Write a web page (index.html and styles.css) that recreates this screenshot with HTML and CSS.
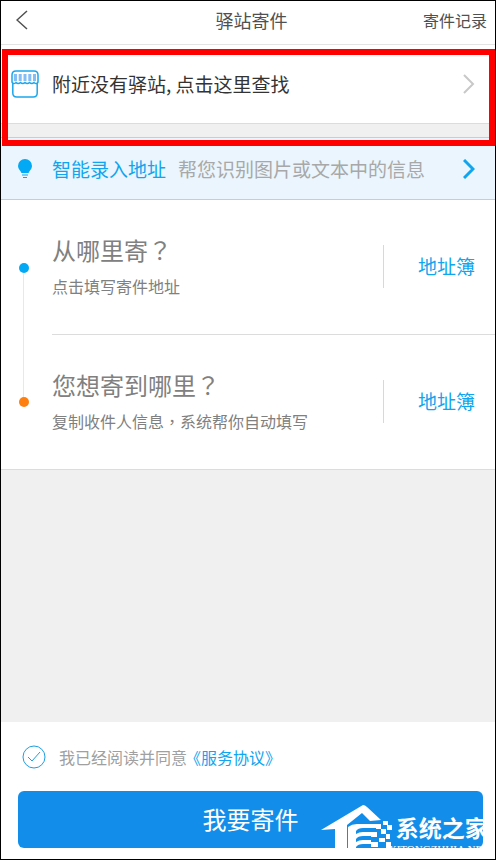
FILE: index.html
```html
<!DOCTYPE html>
<html lang="zh-CN">
<head>
<meta charset="utf-8">
<meta name="viewport" content="width=device-width, initial-scale=1">
<title>驿站寄件</title>
<link rel="stylesheet" href="styles.css">
</head>
<body>
<div class="screen">
  <header class="header">
    <button class="back" type="button" aria-label="返回">
      <svg width="12" height="20" viewBox="0 0 12 20"><path d="M11 1 1 10l10 9"/></svg>
    </button>
    <h1 class="title">驿站寄件</h1>
    <a class="records" href="#">寄件记录</a>
  </header>

  <main class="content">
    <a class="row station" href="#">
      <svg class="row-icon" width="28" height="28" viewBox="0 0 28 28">
        <path class="shop-stripes" d="M4.500 4v7M9.200 4v7M14 4v7M18.800 4v7M23.500 4v7"/>
        <path class="shop-line" d="M5 1h18q4 0 4 4v6.500q0 2-2 2-1.500 0-2-1-1 1-2.200 1t-2.300-1q-1 1-2.250 1T14 12.500q-1 1-2.250 1T9.500 12.500q-1 1-2.300 1T5 12.500q-.5 1-2 1-2 0-2-2V5q0-4 4-4zM1.800 13.500V23q0 4 4 4h16.400q4 0 4-4v-9.500"/>
      </svg>
      <span class="row-text">附近没有驿站, 点击这里查找</span>
      <svg class="chevron" width="12" height="20" viewBox="0 0 12 20"><path d="m1 1 9 9-9 9"/></svg>
    </a>

    <a class="row smart" href="#">
      <svg class="row-icon" width="28" height="20" viewBox="0 0 28 20"><path class="bulb" d="M14 0a7 7 0 0 0-7 7c0 3 2.500 4.500 3.500 7h7c1-2.500 3.500-4 3.500-7a7 7 0 0 0-7-7zM11 15.500h6v1h-6zM12 18h4v1h-4z"/></svg>
      <span class="row-text"><span class="smart-label">智能录入地址</span><span class="smart-hint">帮您识别图片或文本中的信息</span></span>
      <svg class="chevron" width="12" height="20" viewBox="0 0 12 20"><path d="m1 1 9 9-9 9"/></svg>
    </a>

    <section class="addresses">
      <div class="address from">
        <span class="track"><span class="dot"></span></span>
        <div class="address-body">
          <div class="address-text">
            <h2>从哪里寄<span class="mark" lang="zh-TW">？</span></h2>
            <p>点击填写寄件地址</p>
          </div>
          <button class="book" type="button">地址簿</button>
        </div>
      </div>
      <div class="address to">
        <span class="track"><span class="dot"></span></span>
        <div class="address-body">
          <div class="address-text">
            <h2>您想寄到哪里<span class="mark" lang="zh-TW">？</span></h2>
            <p>复制收件人信息<span class="mark" lang="zh-TW">，</span>系统帮你自动填写</p>
          </div>
          <button class="book" type="button">地址簿</button>
        </div>
      </div>
    </section>
  </main>

  <footer class="footer">
    <div class="agreement">
      <input id="agree" class="agree-box" type="checkbox" checked>
      <svg class="agree-mark" width="24" height="24" viewBox="0 0 24 24" aria-hidden="true"><circle cx="12" cy="12" r="11"/><path d="m6 12 4 4 8-9"/></svg>
      <label for="agree">我已经阅读并同意</label><a href="#">《服务协议》</a>
    </div>
    <button class="submit" type="button">我要寄件</button>
  </footer>

  <div class="highlight"></div>
  <div class="watermark">
    <svg width="72" height="44" viewBox="0 0 72 44" aria-hidden="true">
      <path d="M0 25 42 0q2 0 4 2l14 13-11 1-8-8-15 12v24H14V24z"/>
      <path d="M27 22q4-3 9-3h19v4H42q-5 0-7 3v3q3-2 7-2h8v4h-8q-5 0-7 3v3q3-2 7-2h8v4h-8q-5 0-7 3v2h-8z"/>
      <path d="M55 19h5v5h-5zM62 16h5v4h-5zM66 20h5v5h-5zM60 24h5v5h-5zM50 27h6v5h-6zM65 29h4v5h-4zM58 33h6v4h-6zM50 37h7v5h-7zM65 37h5v6h-5z"/>
    </svg>
    <div class="watermark-text"><strong>系统之家</strong><span>XITONGZHIJIA.NET</span></div>
  </div>
</div>
</body>
</html>
```
FILE: styles.css
```css
* { box-sizing: border-box; }

body {
  margin: 0;
  font-family: "Noto Sans CJK SC", sans-serif;
  font-size: 16px;
  line-height: 24px;
  color: #808080;
}

h1, h2, p { margin: 0; font-weight: 400; }
a { color: inherit; text-decoration: none; }
button { padding: 0; border: 0; background: none; font: inherit; color: inherit; }
svg { display: block; flex: none; fill: none; stroke: currentColor; }

/* full-width punctuation centred in its cell */
.mark { font-family: "Noto Sans CJK TC", sans-serif; }

.screen {
  position: relative;
  display: flex;
  flex-direction: column;
  min-height: 100vh;
  border: 1px solid #000;
  background: #f0f0f0;
  overflow: hidden;
}

.header {
  display: grid;
  grid-template-columns: 1fr auto 1fr;
  align-items: center;
  height: 44px;
  padding: 0 8px 6px 15px;
  border-bottom: 1px solid #e4e4e4;
  background: #fff;
  color: #505050;
}
.back { justify-self: start; }
.back svg { stroke-width: 1.5; }
.title { font-size: 18px; }
.records { justify-self: end; }

.content { flex: 1; }

.row {
  display: flex;
  align-items: center;
  gap: 13px;
  padding: 0 20px 0 10px;
  font-size: 19px;
}
.row-text { flex: 1; white-space: nowrap; }
.chevron { stroke-width: 2; }

.station {
  height: 79px;
  border-bottom: 1px solid #dcdcdc;
  background: #fff;
  color: #333;
}
.station .chevron { color: #c8c8c8; }
.shop-line { stroke: #1ba7ec; stroke-width: 1.5; }
.shop-stripes { stroke: #85bdf5; stroke-width: 3; }

.smart {
  height: 63px;
  margin-top: 13px;
  border: solid #b4d3ea;
  border-width: 1px 0;
  background: #eaf5fd;
  color: #10a5ef;
}
.bulb { fill: #03a9f4; stroke: none; }
.smart-hint { margin-left: 12px; color: #a8a8a8; }
.smart .chevron { stroke-width: 3; }

.addresses { border-bottom: 1px solid #dcdcdc; background: #fff; }
.address { display: flex; }
.track {
  display: flex;
  flex-direction: column;
  align-items: center;
  width: 45px;
  margin-right: 6px;
}
.track::before, .track::after { content: ""; flex: 1; width: 1px; }
.from .track::after, .to .track::before { background: #e8e8e8; }
.dot { width: 10px; height: 10px; border-radius: 50%; background: #03a9f4; }
.to .dot { background: #ff7f0e; }
.address-body {
  display: flex;
  flex: 1;
  align-items: center;
  height: 134px;
  padding-bottom: 2px;
}
.from .address-body { height: 135px; border-bottom: 1px solid #dcdcdc; }
.address-text { flex: 1; }
.address-text h2 { margin-bottom: 8px; font-size: 24px; line-height: 32px; }
.book {
  height: 43px;
  padding: 0 20px 0 34px;
  border-left: 1px solid #d8d8d8;
  font-size: 19px;
  color: #10a5ef;
}

.footer { padding: 23px 12px 11px 17px; background: #fff; }
.agreement {
  position: relative;
  display: flex;
  align-items: center;
  margin-bottom: 22px;
  padding-left: 4px;
  color: #a0a0a0;
}
.agree-box { position: absolute; width: 24px; height: 24px; margin: 0; opacity: 0; }
.agree-mark { margin-right: 13px; color: #1e9fe0; }
.agreement a { margin-left: 6px; font-feature-settings: "halt"; color: #10a5ef; }
.submit {
  width: 100%;
  height: 57px;
  padding-bottom: 2px;
  border-radius: 6px;
  background: #128eea;
  font-size: 24px;
  color: #fff;
}

.highlight {
  position: absolute;
  top: 48px;
  left: 1px;
  right: 0;
  height: 97px;
  border: 6px solid #fe0000;
}

.watermark {
  position: absolute;
  right: 6px;
  bottom: 4px;
  display: flex;
  align-items: flex-end;
  color: #fff;
}
.watermark svg { margin-bottom: 6px; fill: currentColor; stroke: none; }
.watermark-text { display: flex; flex-direction: column; white-space: nowrap; }
.watermark strong { padding-left: 3px; font-size: 23px; line-height: 32px; }
.watermark-text span {
  margin-left: -4px;
  font-family: "Liberation Serif", serif;
  font-size: 11px;
  line-height: 12px;
}
```
